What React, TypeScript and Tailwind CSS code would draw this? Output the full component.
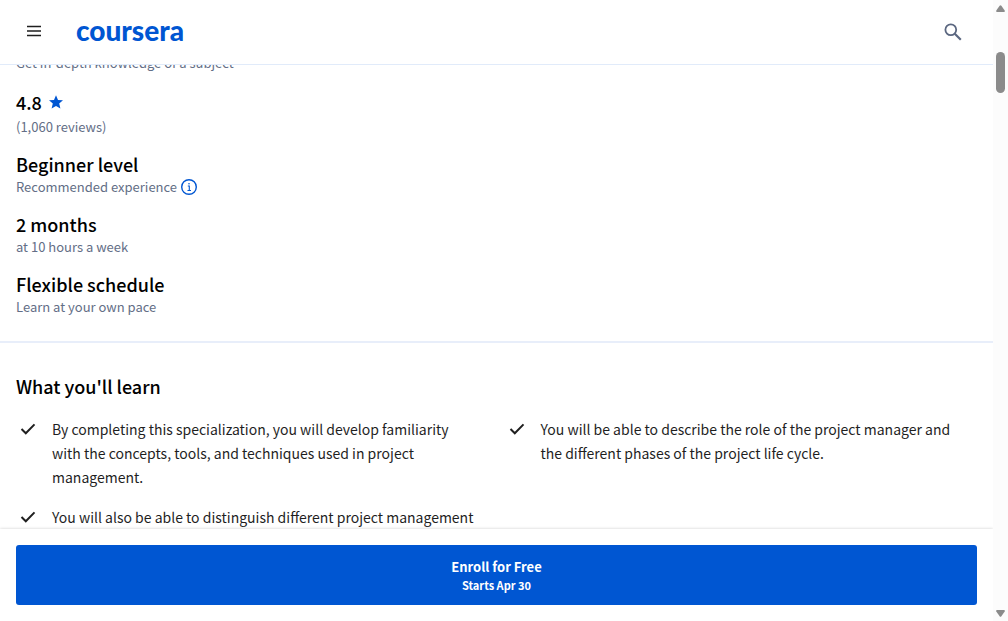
import React from "react";

const facts = [
  { title: "Beginner level", detail: "Recommended experience", info: true },
  { title: "2 months", detail: "at 10 hours a week", info: false },
  { title: "Flexible schedule", detail: "Learn at your own pace", info: false },
];

const outcomes = [
  "By completing this specialization, you will develop familiarity with the concepts, tools, and techniques used in project management.",
  "You will be able to describe the role of the project manager and the different phases of the project life cycle.",
  "You will also be able to distinguish different project management",
];

function InfoIcon() {
  return (
    <svg viewBox="0 0 16 16" className="size-4" fill="none" stroke="#0056d2" aria-hidden="true">
      <circle cx="8" cy="8" r="7.3" strokeWidth="1.4" />
      <path d="M6.8 7h1.500v4.500M6.500 11.500h3.500" strokeWidth="1.1" />
      <circle cx="8" cy="4.8" r="0.8" fill="#0056d2" stroke="none" />
    </svg>
  );
}

function CheckIcon() {
  return (
    <svg viewBox="0 0 24 24" className="size-6 shrink-0" fill="none" stroke="#1f1f1f" strokeWidth="2" aria-hidden="true">
      <path d="M5.500 12l4.300 4.300L18.500 7.400" />
    </svg>
  );
}

function Header() {
  return (
    <header className="flex h-[65px] shrink-0 items-center border-b border-[#e1ebfa] bg-white px-[27px]">
      <button type="button" aria-label="Menu" className="flex">
        <svg viewBox="0 0 14 12" className="mb-0.5 h-3 w-3.5" stroke="#1f1f1f" strokeWidth="1.5" aria-hidden="true">
          <path d="M0 1.5h14M0 6h14M0 10.5h14" />
        </svg>
      </button>
      <a href="#" className="mb-1 ml-[35px] font-['Lato',sans-serif] text-[28px] leading-8 font-black text-[#0056d2]">
        coursera
      </a>
      <button type="button" aria-label="Search" className="mr-1 ml-auto">
        <svg viewBox="0 0 18 18" className="size-[18px]" fill="none" stroke="#5b6780" aria-hidden="true">
          <circle cx="6.8" cy="6.8" r="5.4" strokeWidth="1.8" />
          <path d="M10.8 10.8l6 6" strokeWidth="2.2" />
        </svg>
      </button>
    </header>
  );
}

function ScrollTrack() {
  return (
    <div className="relative z-10 flex w-[15px] shrink-0 flex-col items-center bg-[#fcfcfc] pt-[5px] pb-1" aria-hidden="true">
      <svg viewBox="0 0 9 7" className="h-[7px] w-[9px]" fill="#8b8b8b">
        <path d="M3.6.8Q4.5-.4 5.4.8L8.7 5.6Q9.2 7 8 7H1Q-.2 7 .3 5.6Z" />
      </svg>
      <div className="mt-10 h-[41px] w-[9px] rounded-full bg-[#8b8b8b]" />
      <svg viewBox="0 0 9 7" className="mt-auto h-[7px] w-[9px]" fill="#8b8b8b">
        <path d="M3.6 6.2Q4.5 7.4 5.4 6.2L8.7 1.4Q9.2 0 8 0H1Q-.2 0 .3 1.4Z" />
      </svg>
    </div>
  );
}

export default function App() {
  return (
    <div className="flex h-screen bg-white font-['Noto_Sans_CJK_SC',sans-serif] text-[#1f1f1f]">
      <div className="flex min-w-0 flex-1 flex-col">
        <Header />
        <main className="min-h-0 flex-1 overflow-hidden">
          <section className="-mt-3 border-b-2 border-[#e8eefa] px-4 pb-6">
            <p className="text-[13px] leading-5 text-[#636e86]">Get in-depth knowledge of a subject</p>
            <div className="mt-[18px]">
              <h2 className="flex items-center gap-[7px] text-lg leading-[22px] font-medium text-black">
                4.8
                <svg viewBox="0 0 14 14" className="size-3.5" fill="#0056d2" aria-hidden="true">
                  <path d="M7 .3l2 4.600 5 .4-3.800 3.300 1.200 5L7 11l-4.400 2.600 1.200-5L0 5.300l5-.4z" />
                </svg>
              </h2>
              <p className="mt-1 text-[13px] leading-5 text-[#636e86]">(1,060 reviews)</p>
            </div>
            {facts.map((fact) => (
              <div key={fact.title} className="mt-4">
                <h2 className="pb-0.5 text-lg leading-[22px] font-medium text-black">{fact.title}</h2>
                <div className="flex items-center gap-1 text-[13px] leading-5 text-[#636e86]">
                  <p>{fact.detail}</p>
                  {fact.info && (
                    <button type="button" aria-label="About recommended experience">
                      <InfoIcon />
                    </button>
                  )}
                </div>
              </div>
            ))}
          </section>
          <section className="px-4 pt-8">
            <h2 className="pb-0.5 text-lg leading-[22px] font-medium text-black">What you'll learn</h2>
            <ul className="mt-[18px] grid grid-cols-2 gap-4">
              {outcomes.map((text) => (
                <li key={text} className="flex items-start gap-3 pr-3 text-sm leading-6">
                  <CheckIcon />
                  <p>{text}</p>
                </li>
              ))}
            </ul>
          </section>
        </main>
        <footer className="relative shrink-0 bg-white p-4 shadow-[0_0_3px_rgba(0,0,0,0.2)]">
          <button
            type="button"
            className="flex h-[60px] w-full flex-col items-center justify-center rounded-[3px] bg-[#0056d2] font-bold text-white"
          >
            <span className="text-[13px] leading-5">Enroll for Free</span>
            <span className="text-[11px] leading-4">Starts Apr 30</span>
          </button>
        </footer>
      </div>
      <ScrollTrack />
    </div>
  );
}
